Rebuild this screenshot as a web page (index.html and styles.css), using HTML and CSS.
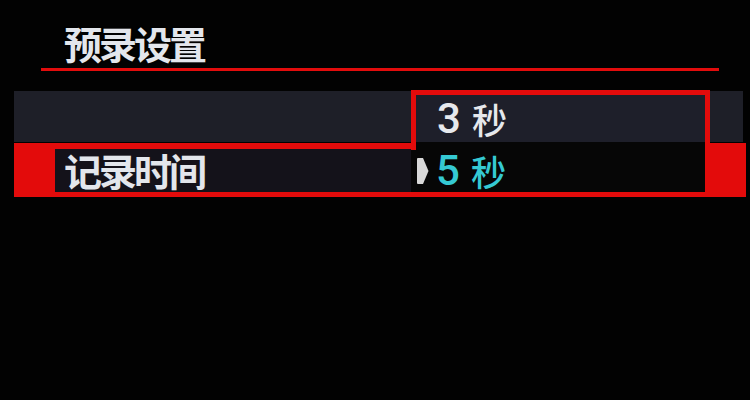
FILE: index.html
```html
<!DOCTYPE html>
<html lang="zh-CN">
<head>
<meta charset="utf-8">
<title>预录设置</title>
<link rel="stylesheet" href="styles.css">
</head>
<body>
<div class="screen">
  <header class="head">
    <h1 class="title">预录设置</h1>
    <div class="rule"></div>
  </header>
  <div class="menu">
    <div class="row row-plain"></div>
    <div class="row row-sel">
      <div class="sel-inner">
        <div class="label">记录时间</div>
        <div class="value">
          <svg class="cursor" width="12" height="26" viewBox="0 0 12 26"><path d="M0 1 Q0 0 1 0 L6 0 L11.5 13 L6 26 L1 26 Q0 26 0 25 Z" fill="#d8d8d8"/></svg>
          <span class="opt opt-cur"><span class="num">5</span><span class="unit">秒</span></span>
        </div>
      </div>
    </div>
    <div class="popup">
      <div class="popup-item"><span class="opt"><span class="num">3</span><span class="unit">秒</span></span></div>
      <div class="popup-gap"></div>
    </div>
  </div>
</div>
</body>
</html>
```
FILE: styles.css
```css
html, body {
  margin: 0;
  padding: 0;
  background: #000;
}
.screen {
  width: 750px;
  height: 400px;
  background: #020202;
  overflow: hidden;
  font-family: "Noto Sans CJK SC", "DejaVu Sans", sans-serif;
  color: #e3e6ec;
}
.head {
  padding-top: 18px;
}
.title {
  margin: 0 0 0 64px;
  font-size: 38px;
  font-weight: 700;
  letter-spacing: -3px;
  line-height: 50px;
  height: 50px;
  text-shadow: 0 0 2px #000;
}
.rule {
  margin-left: 41px;
  width: 678px;
  height: 3px;
  background: #e20c0c;
}
.menu {
  position: relative;
  margin-top: 20px;
  padding-left: 14px;
}
.row-plain {
  width: 729px;
  height: 51px;
  background: #1e1f28;
}
.row-sel {
  margin-top: 1px;
  width: 732px;
  height: 54px;
  box-sizing: border-box;
  padding: 6px 41px 5px 41px;
  background: #e30b0b;
}
.sel-inner {
  display: flex;
  height: 43px;
  background: #14121a;
}
.label {
  width: 356px;
  padding-left: 9px;
  box-sizing: border-box;
  font-size: 38px;
  font-weight: 700;
  letter-spacing: -3px;
  line-height: 42px;
}
.value {
  flex: 1;
  display: flex;
  align-items: center;
  background: #060606;
  padding-left: 6px;
}
.cursor {
  display: block;
  margin-right: 7px;
}
.opt {
  display: flex;
  align-items: center;
  gap: 11px;
}
.num {
  font-family: Roboto, "DejaVu Sans", sans-serif;
  font-size: 42px;
  font-weight: 500;
  line-height: 1;
}
.unit {
  font-size: 35px;
  font-weight: 500;
  line-height: 1;
}
.opt-cur {
  color: #35c9d3;
}
.popup {
  position: absolute;
  left: 411px;
  top: -1px;
  width: 299px;
  box-sizing: border-box;
  border: 5px solid #e30b0b;
  border-bottom: none;
}
.popup-item {
  height: 47px;
  background: #1e1f2a;
  display: flex;
  align-items: center;
  padding-left: 21px;
  color: #e6e8ec;
}
.popup-gap {
  height: 8px;
  background: #060606;
}
```
